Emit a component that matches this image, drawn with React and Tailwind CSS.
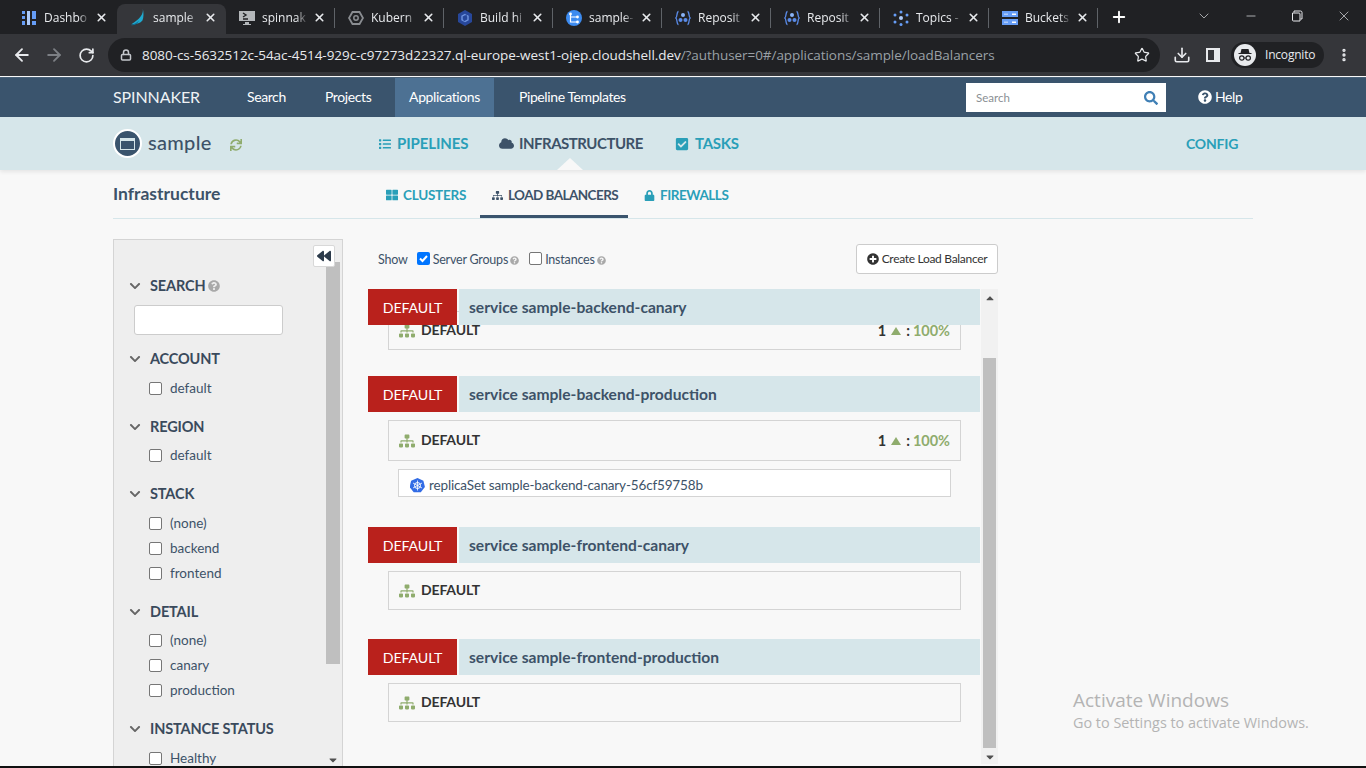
import React from 'react';
import { ArrowLeft, ArrowRight, RotateCw, Lock, Star, Download, X, Plus, ChevronDown, Minus, EllipsisVertical } from 'lucide-react';
import {
  FaBackward, FaChevronDown, FaCheckSquare, FaCloud, FaList, FaLock, FaPlusCircle,
  FaQuestionCircle, FaSearch, FaSitemap, FaSync, FaThLarge, FaCaretUp, FaCaretDown,
} from 'react-icons/fa';

const IconDash = () => (
  <svg width="16" height="16" viewBox="0 0 16 16"><path fill="#669df6" d="M1 1h3v3H1zM1 6h3v3H1zM1 11h3v4H1zM11 1h4v8h-4zM11 11h4v4h-4z" /><path fill="#aecbfa" d="M6 1h3v14H6z" /></svg>
);
const IconSail = () => (
  <svg width="18" height="19" viewBox="0 0 18 19"><path fill="#1fa9cf" d="M14.500 0c.5 6-3 11-13 17 4 .5 10-.5 12.500-4 1.500-3.500 1.500-9 .5-13z" /><path fill="#0d6f96" d="M1 18c4-1 7-2.500 9-5 -1 3.500-4 6-9 5z" /></svg>
);
const IconTerm = () => (
  <svg width="16" height="16" viewBox="0 0 16 16"><path fill="#b4b7ba" d="M0 1h16v10H0zM6 12h4v2h2v1H4v-1h2z" /><path stroke="#202124" strokeWidth="1.400" fill="none" d="M4 3l3 2-3 2M4 9h5" /></svg>
);
const IconK8s = () => (
  <svg width="16" height="16" viewBox="0 0 16 16"><path fill="none" stroke="#8a8d91" strokeWidth="1.800" d="M4.500 2h7L15 8l-3.500 6h-7L1 8z" /><circle cx="8" cy="8" r="2.200" fill="none" stroke="#8a8d91" strokeWidth="1.500" /></svg>
);
const IconBuild = () => (
  <svg width="16" height="18" viewBox="0 0 16 18"><path fill="#27479a" d="M8 1l7 4v8l-7 4-7-4V5z" /><path fill="none" stroke="#6f94e0" strokeWidth="1.400" d="M8 5.500l3 1.700v3.600l-3 1.700-3-1.700V7.200z" /><path stroke="#27479a" strokeWidth="1.200" d="M9.500 5.500L7 12" /></svg>
);
const IconRepo = () => (
  <svg width="16" height="16" viewBox="0 0 16 16"><circle cx="8" cy="8" r="8" fill="#3c8bf0" /><path stroke="#fff" strokeWidth="1.200" fill="none" d="M4.500 4v8h7M4.500 7h7" /><circle cx="4.500" cy="4" r="1.400" fill="#fff" /><circle cx="11.500" cy="7" r="1.400" fill="#fff" /><circle cx="11.500" cy="12" r="1.400" fill="#fff" /></svg>
);
const IconRegistry = () => (
  <svg width="16" height="16" viewBox="0 0 16 16"><path fill="none" stroke="#5a8be8" strokeWidth="1.300" d="M3.500 1.500C1.500 1.500 2.500 7 .8 8c1.700 1 .7 6.500 2.700 6.500M12.500 1.500C14.500 1.500 13.500 7 15.200 8c-1.700 1-.7 6.500-2.700 6.500" /><circle cx="8" cy="5" r="2" fill="#8ab4f8" /><circle cx="5.500" cy="10" r="2" fill="#5a8be8" /><circle cx="10.500" cy="10" r="2" fill="#5a8be8" /></svg>
);
const IconTopics = () => (
  <svg width="16" height="16" viewBox="0 0 16 16" fill="#669df6"><circle cx="8" cy="8" r="2" fill="#aecbfa" /><circle cx="8" cy="2" r="1.500" /><circle cx="2" cy="5" r="1.500" /><circle cx="14" cy="5" r="1.500" /><circle cx="2" cy="12" r="1.500" /><circle cx="14" cy="12" r="1.500" /><circle cx="8" cy="14.500" r="1.500" /></svg>
);
const IconBucket = () => (
  <svg width="16" height="14" viewBox="0 0 16 14"><path fill="#669df6" d="M0 0h16v6H0zM0 8h16v6H0z" /><path fill="#fff" d="M10 2.500h4v1.500h-4zM10 10.500h4v1.500h-4z" /><path fill="#aecbfa" d="M2 2.500h4v1.500H2zM2 10.500h4v1.500H2z" /></svg>
);
const IconIncognito = () => (
  <svg width="22" height="22" viewBox="0 0 22 22"><circle cx="11" cy="11" r="11" fill="#e8eaed" /><path fill="#202124" d="M7.500 5h7l1 4h2v1h-13V9h2z" /><circle cx="7.800" cy="14" r="2.200" fill="none" stroke="#202124" strokeWidth="1.200" /><circle cx="14.200" cy="14" r="2.200" fill="none" stroke="#202124" strokeWidth="1.200" /><path stroke="#202124" d="M10 14h2" /></svg>
);
const IconKube = () => (
  <svg width="15" height="15" viewBox="0 0 15 15"><path fill="#326ce5" d="M7.500 0l5.900 2.800 1.500 6.300-4.100 5.200H3.700L-.4 9.100 1.100 2.800z" /><circle cx="7.500" cy="7.500" r="3" fill="none" stroke="#fff" strokeWidth="1" /><path stroke="#fff" strokeWidth=".8" d="M7.500 2.500v10M3 5l9 5M12 5l-9 5" /></svg>
);

const tabs = [
  { label: 'Dashbo', icon: IconDash },
  { label: 'sample', icon: IconSail, active: true },
  { label: 'spinnak', icon: IconTerm, sep: true },
  { label: 'Kubern', icon: IconK8s, sep: true },
  { label: 'Build hi', icon: IconBuild, sep: true },
  { label: 'sample-', icon: IconRepo, sep: true },
  { label: 'Reposit', icon: IconRegistry, sep: true },
  { label: 'Reposit', icon: IconRegistry, sep: true },
  { label: 'Topics -', icon: IconTopics, sep: true },
  { label: 'Buckets', icon: IconBucket, sep: true },
];

function BrowserChrome() {
  return (
    <div className="font-['Open_Sans',sans-serif] text-white">
      <div className="h-[34px] bg-[#202124] flex items-end pl-[8px]">
        {tabs.map((t, i) => {
          const Icon = t.icon;
          return (
            <div key={i} className={`w-[109px] h-[30px] flex items-center pl-[13px] pb-[3px] rounded-t-lg ${t.active ? 'bg-[#35363a]' : ''}`}>
              <span className="w-[16px] h-[18px] flex items-center justify-center shrink-0"><Icon /></span>
              <span className="ml-[7px] w-[46px] h-[18px] leading-[18px] overflow-hidden whitespace-nowrap text-[12px] text-[#e8eaed] [mask-image:linear-gradient(90deg,#000_75%,transparent)]">{t.label}</span>
              <X size={13} strokeWidth={3} className="ml-[5px] shrink-0 text-[#e8eaed]" />
              {t.sep && <div className="ml-auto w-px h-[20px] bg-[#5f6368]" />}
            </div>
          );
        })}
        <Plus size={18} strokeWidth={2.500} className="ml-[12px] mb-[8px] text-white" />
        <div className="ml-[68px] mb-[10px] flex items-center">
          <ChevronDown size={16} strokeWidth={1} className="text-[#e8eaed]" />
          <Minus size={14} strokeWidth={1.200} className="ml-[32px] text-[#e8eaed]" />
          <svg width="12" height="12" viewBox="0 0 12 12" className="ml-[33px]"><path fill="none" stroke="#e8eaed" d="M3 2.500V1h6.500a1.500 1.500 0 0 1 1.500 1.500V9H9.500M1.500 3h6.500a1 1 0 0 1 1 1v7H2.500a1 1 0 0 1-1-1z" /></svg>
          <X size={16} strokeWidth={1} className="ml-[33px] text-[#e8eaed]" />
        </div>
      </div>
      <div className="h-[42px] bg-[#35363a] flex items-center">
        <ArrowLeft size={20} strokeWidth={2.200} className="ml-[12px] text-[#e8eaed]" />
        <ArrowRight size={20} strokeWidth={2.200} className="ml-[12px] text-[#7d8085]" />
        <RotateCw size={17} strokeWidth={2.400} className="ml-[14px] text-[#e8eaed]" />
        <div className="ml-[13px] w-[1052px] h-[34px] rounded-full bg-[#202124] flex items-center pl-[12px] pr-[10px]">
          <Lock size={12} strokeWidth={3} className="text-[#c4c7cc]" />
          <span className="ml-[10px] text-[13.500px] tracking-[-0.060px] whitespace-nowrap text-[#e8eaed]">8080-cs-5632512c-54ac-4514-929c-c97273d22327.ql-europe-west1-ojep.cloudshell.dev<span className="text-[#9aa0a6]">/?authuser=0#/applications/sample/loadBalancers</span></span>
          <Star size={16} strokeWidth={1.800} className="ml-auto text-[#e8eaed]" />
        </div>
        <Download size={18} strokeWidth={2.200} className="ml-[13px] text-[#e8eaed]" />
        <div className="ml-[15px] w-[14px] h-[14px] border-2 border-[#e8eaed] border-r-[6px]" />
        <div className="ml-[11px] w-[93px] h-[26px] rounded-full bg-[#202124] flex items-center pl-[3px]">
          <IconIncognito />
          <span className="ml-[9px] text-[12px] text-[#e8eaed] tracking-[-0.200px]">Incognito</span>
        </div>
        <EllipsisVertical size={16} strokeWidth={3} className="ml-[12px] text-[#e8eaed]" />
      </div>
    </div>
  );
}

function TopNav() {
  return (
    <div className="h-[40px] mt-[1px] bg-[#3a546d] border-t border-[#4a6278] flex items-stretch pl-[113px] text-white text-[14px] tracking-[-0.400px]">
      <span className="self-center -mt-[2px] w-[134px] text-[16px] tracking-[-0.100px] text-[#eef2f5]">SPINNAKER</span>
      <span className="self-center -mt-[2px] w-[78px]">Search</span>
      <span className="self-center -mt-[2px] w-[70px]">Projects</span>
      <span className="w-[99px] pb-[2px] bg-[#4d7193] flex items-center justify-center">Applications</span>
      <span className="self-center -mt-[2px] ml-[25px] w-[447px]">Pipeline Templates</span>
      <div className="self-center w-[200px] h-[29px] bg-white flex items-center justify-between pl-[10px] pr-[8px]">
        <span className="text-[11.500px] tracking-normal text-[#8b8f94]">Search</span>
        <FaSearch size={14} className="text-[#3f7fb5]" />
      </div>
      <span className="self-center -mt-[2px] ml-[32px] flex items-center gap-[3px]"><FaQuestionCircle size={14} />Help</span>
    </div>
  );
}

function AppHeader() {
  return (
    <div className="relative h-[53px] bg-[#d6e6ea] flex items-center pl-[113px] shadow-[0_2px_4px_rgba(0,0,0,0.08)] font-bold text-[15px]">
      <div className="w-[29px] h-[29px] rounded-full bg-[#3a546d] border-2 border-white flex items-center justify-center">
        <div className="w-[15px] h-[12px] bg-[#d6e6ea] p-[1px] pt-[3px]"><div className="w-full h-full bg-[#3a546d]" /></div>
      </div>
      <span className="ml-[6px] -mt-[3px] w-[81px] text-[20px] text-[#3d5268] font-medium tracking-[0.300px]">sample</span>
      <FaSync size={12} className="ml-[1px] mt-[2px] text-[#8fac6d]" />
      <FaList size={12} className="ml-[137px] text-[#2a9fb8]" />
      <span className="ml-[6px] w-[90px] tracking-[-0.100px] text-[#2a9fb8]">PIPELINES</span>
      <FaCloud size={15} className="ml-[12px] text-[#3d5268]" />
      <span className="ml-[5px] w-[156px] tracking-[-0.500px] text-[#3d5268]">INFRASTRUCTURE</span>
      <FaCheckSquare size={14} className="text-[#2a9fb8]" />
      <span className="ml-[6px] w-[491px] tracking-[-0.300px] text-[#2a9fb8]">TASKS</span>
      <span className="text-[14px] tracking-[-0.200px] text-[#2a9fb8]">CONFIG</span>
      <div className="absolute left-[557px] bottom-0 w-0 h-0 border-x-[13px] border-x-transparent border-b-[12px] border-b-[#f8f8f8]" />
    </div>
  );
}

function SubHeader() {
  return (
    <div className="mx-[113px] h-[49px] pt-[2px] border-b border-[#d6e6ea] flex items-center text-[13.500px] font-bold tracking-[-0.250px] whitespace-nowrap">
      <span className="w-[273px] text-[17.500px] tracking-normal text-[#3d5268] -mt-[1px]">Infrastructure</span>
      <FaThLarge size={12} className="text-[#2a9fb8]" />
      <span className="ml-[5px] w-[77px] text-[#2a9fb8]">CLUSTERS</span>
      <div className="h-full w-[148px] pt-[4px] border-b-[3px] border-[#3a546d] flex items-center pl-[12px] text-[#3d5268]">
        <FaSitemap size={11} />
        <span className="ml-[5px] tracking-[-0.550px]">LOAD BALANCERS</span>
      </div>
      <FaLock size={11} className="ml-[16px] text-[#2a9fb8]" />
      <span className="ml-[5px] tracking-[-0.450px] text-[#2a9fb8]">FIREWALLS</span>
    </div>
  );
}

const filters = [
  { title: 'ACCOUNT', mt: 'mt-[13px]', listMt: 'mt-[7px]', items: ['default'] },
  { title: 'REGION', mt: 'mt-[15px]', listMt: 'mt-[6px]', items: ['default'] },
  { title: 'STACK', mt: 'mt-[15px]', listMt: 'mt-[7px]', items: ['(none)', 'backend', 'frontend'] },
  { title: 'DETAIL', mt: 'mt-[15px]', listMt: 'mt-[6px]', items: ['(none)', 'canary', 'production'] },
  { title: 'INSTANCE STATUS', mt: 'mt-[15px]', listMt: 'mt-[7px]', items: ['Healthy'] },
];

function FilterHead({ title, children }) {
  return (
    <div className="h-[21px] flex items-center">
      <FaChevronDown size={12} className="text-[#666]" />
      <span className="ml-[9px] text-[14.500px] tracking-[-0.150px] font-bold text-[#3a4a5c]">{title}</span>
      {children}
    </div>
  );
}

function Box() {
  return <span className="w-[13px] h-[13px] shrink-0 rounded-[2px] bg-white border border-[#767676]" />;
}

function Sidebar() {
  return (
    <div className="relative w-[230px] shrink-0 h-[530px] overflow-hidden bg-[#eeeeee] border border-[#d4d4d4] flex">
      <div className="flex-1 pl-[15px] pt-[35px] overflow-hidden">
        <FilterHead title="SEARCH"><FaQuestionCircle size={12} className="ml-[3px] text-[#a9a9a9]" /></FilterHead>
        <div className="mt-[9px] ml-[5px] w-[149px] h-[30px] bg-white border border-[#ccc] rounded-[3px]" />
        {filters.map((f) => (
          <div key={f.title} className={f.mt}>
            <FilterHead title={f.title} />
            <div className={`${f.listMt} flex flex-col`}>
              {f.items.map((it, i) => (
                <label key={i} className="h-[25px] flex items-center pl-[20px] text-[13.500px] text-[#3d5268]">
                  <Box />
                  <span className="ml-[8px]">{it}</span>
                </label>
              ))}
            </div>
          </div>
        ))}
      </div>
      <div className="w-[16px] shrink-0 bg-[#eeeeee] pt-[22px] pr-[2px] flex flex-col">
        <div className="h-[402px] bg-[#bfbfbf]" />
        <FaCaretDown size={12} className="mt-auto mb-[2px] ml-[1px] text-[#505050]" />
      </div>
      <div className="absolute top-[5px] left-[199px] w-[22px] h-[22px] bg-white border border-[#d8d8d8] rounded-[2px] flex items-center justify-center">
        <FaBackward size={14} className="text-[#2b3a4a]" />
      </div>
    </div>
  );
}

function Group({ title, overlap, children, mt }) {
  return (
    <div className={mt}>
      <div className="relative z-10 flex h-[36px] w-[612px] text-[15.600px] font-bold">
        <div className="w-[89px] pt-[2px] bg-[#b9211c] flex items-center justify-center text-[14.200px] tracking-[-0.100px] text-white font-normal">DEFAULT</div>
        <div className="ml-[2px] pt-[2px] flex-1 bg-[#d6e6ea] flex items-center pl-[10px] text-[#3d5268]">service {title}</div>
      </div>
      <div className={overlap ? '-mt-[14px]' : 'mt-[8px]'}>{children}</div>
    </div>
  );
}

function LoadBalancer({ h = 'h-[39px]', stats }) {
  return (
    <div className={`ml-[20px] w-[573px] ${h} border border-[#d4d4d4] flex items-center pl-[10px] pr-[10px]`}>
      <FaSitemap size={16} className="text-[#8fac6d]" />
      <span className="ml-[6px] mb-[2px] text-[14px] tracking-[-0.150px] font-bold text-[#333]">DEFAULT</span>
      {stats && (
        <span className="ml-auto flex items-center text-[14.500px] font-bold text-[#333]">
          1
          <span className="ml-[5px] w-0 h-0 border-x-[5px] border-x-transparent border-b-[8px] border-b-[#8fac6d]" />
          <span className="ml-[5px]">:</span>
          <span className="ml-[3px] text-[#8fac6d]">100%</span>
        </span>
      )}
    </div>
  );
}

function Content() {
  return (
    <div className="w-[630px] shrink-0">
      <div className="h-[50px] pt-[5px] pb-[15px] flex items-center text-[12.500px] tracking-[-0.200px] text-[#3d5268]">
        <span className="ml-[10px] mt-[2px]">Show</span>
        <span className="ml-[9px] -mt-[2px] w-[13px] h-[13px] rounded-[2px] bg-[#0075ff] flex items-center justify-center">
          <svg width="11" height="11" viewBox="0 0 11 11"><path d="M2 5.500l2.500 2.500L9 3" fill="none" stroke="#fff" strokeWidth="2" /></svg>
        </span>
        <span className="ml-[3px] mt-[2px]">Server Groups</span>
        <FaQuestionCircle size={9} className="ml-[2px] mt-[2px] text-[#a9a9a9]" />
        <span className="ml-[10px] -mt-[2px] w-[13px] h-[13px] rounded-[2px] bg-white border border-[#767676]" />
        <span className="ml-[3px] mt-[2px]">Instances</span>
        <FaQuestionCircle size={9} className="ml-[2px] mt-[2px] text-[#a9a9a9]" />
        <div className="ml-auto w-[142px] h-[30px] bg-white border border-[#ccc] rounded-[3px] flex items-center justify-center gap-[3px] text-[12px] tracking-[-0.300px] text-[#333]">
          <FaPlusCircle size={12} />Create Load Balancer
        </div>
      </div>
      <div className="flex h-[475px] overflow-hidden">
        <div className="flex-1">
          <Group title="sample-backend-canary" overlap>
            <LoadBalancer stats />
          </Group>
          <Group title="sample-backend-production" mt="mt-[26px]">
            <LoadBalancer h="h-[41px]" stats />
            <div className="ml-[30px] mt-[8px] w-[553px] h-[28px] pt-[4px] bg-white border border-[#d4d4d4] flex items-center pl-[11px] text-[13.500px] tracking-[-0.150px] text-[#3d5268]">
              <IconKube />
              <span className="ml-[4px]">replicaSet sample-backend-canary-56cf59758b</span>
            </div>
          </Group>
          <Group title="sample-frontend-canary" mt="mt-[30px]">
            <LoadBalancer />
          </Group>
          <Group title="sample-frontend-production" mt="mt-[29px]">
            <LoadBalancer />
          </Group>
        </div>
        <div className="w-[17px] shrink-0 bg-[#f1f1f1] flex flex-col items-center">
          <FaCaretUp size={12} className="mt-[3px] text-[#505050]" />
          <div className="mt-[54px] w-[13px] h-[390px] bg-[#bfbfbf]" />
          <FaCaretDown size={12} className="mt-[3px] text-[#505050]" />
        </div>
      </div>
    </div>
  );
}

export default function App() {
  return (
    <div className="relative w-[1366px] h-[768px] overflow-hidden bg-[#f8f8f8] font-['Lato',sans-serif]">
      <BrowserChrome />
      <TopNav />
      <AppHeader />
      <SubHeader />
      <div className="flex pl-[113px] pt-[20px] gap-[25px]">
        <Sidebar />
        <Content />
      </div>
      <div className="absolute left-[1073px] top-[688px] text-[#b4b4b4] font-['Open_Sans',sans-serif]">
        <div className="text-[19px] leading-[24px]">Activate Windows</div>
        <div className="text-[14.400px] leading-[22px]">Go to Settings to activate Windows.</div>
      </div>
      <div className="absolute left-0 right-0 bottom-0 h-[2px] bg-[#111]" />
    </div>
  );
}
